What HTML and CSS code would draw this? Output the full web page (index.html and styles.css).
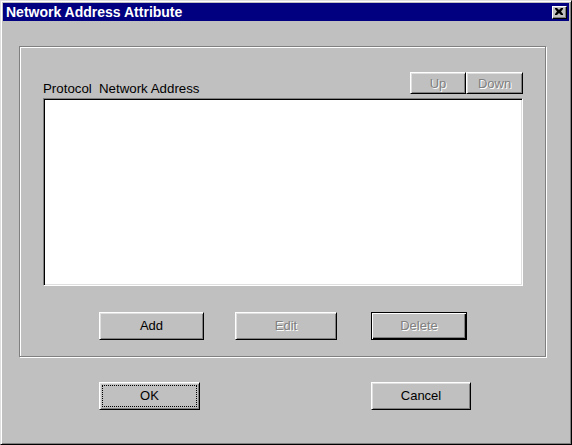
FILE: index.html
```html
<!DOCTYPE html>
<html>
<head>
<meta charset="utf-8">
<title>Network Address Attribute</title>
<link rel="stylesheet" href="styles.css">
</head>
<body>
<div class="window">
  <div class="titlebar">
    <span class="title">Network Address Attribute</span>
    <span class="close">
      <svg width="8" height="7" viewBox="0 0 8 7"><path d="M0 0h2l2 2 2-2h2v1l-2 2.5 2 2.5v1h-2l-2-2-2 2h-2v-1l2-2.5-2-2.5z" fill="#000"/></svg>
    </span>
  </div>
  <div class="group">
    <div class="toprow">
      <div class="header"><span class="col1">Protocol</span><span>Network Address</span></div>
      <div class="updown">
        <button class="btn disabled up">Up</button>
        <button class="btn disabled down">Down</button>
      </div>
    </div>
    <div class="list"></div>
    <div class="actions">
      <button class="btn add">Add</button>
      <button class="btn disabled edit">Edit</button>
      <button class="btn disabled default delete">Delete</button>
    </div>
  </div>
  <div class="footer">
    <button class="btn ok"><span class="focus">OK</span></button>
    <button class="btn cancel">Cancel</button>
  </div>
</div>
</body>
</html>
```
FILE: styles.css
```css
html, body {
  margin: 0;
  padding: 0;
  background: #c0c0c0;
}
.window {
  width: 572px;
  height: 445px;
  box-sizing: border-box;
  background: #c0c0c0;
  border: 1px solid;
  border-color: #dfdfdf #000 #000 #dfdfdf;
  box-shadow: inset 1px 1px #fff, inset -1px -1px #808080;
  padding: 2px;
  font-family: "Liberation Sans", Arial, sans-serif;
  font-size: 13px;
  color: #000;
}
.titlebar {
  height: 18px;
  background: #000080;
  display: flex;
  align-items: center;
  justify-content: space-between;
  padding-left: 3px;
  padding-right: 2px;
}
.title {
  color: #fff;
  font-weight: bold;
  font-size: 14px;
  line-height: 18px;
}
.close {
  width: 15px;
  height: 13px;
  box-sizing: border-box;
  background: #c0c0c0;
  border: 1px solid;
  border-color: #fff #000 #000 #fff;
  box-shadow: inset -1px -1px #808080;
  display: flex;
  align-items: center;
  justify-content: center;
}
.close svg {
  display: block;
  margin: 0 1px 1px 0;
}
.group {
  margin: 25px 0 0 16px;
  width: 527px;
  height: 311px;
  box-sizing: border-box;
  border: 1px solid #808080;
  box-shadow: 1px 1px 0 #fff, inset 1px 1px 0 #fff;
  padding: 25px 0 0 23px;
}
.toprow {
  width: 480px;
  height: 22px;
  display: flex;
  align-items: flex-end;
  justify-content: space-between;
}
.header {
  line-height: 15px;
  font-size: 13.3px;
  display: flex;
  margin-bottom: -2px;
}
.col1 {
  width: 56px;
}
.updown {
  display: flex;
  align-self: stretch;
}
.btn {
  font-family: "Liberation Sans", Arial, sans-serif;
  font-size: 13px;
  color: #000;
  background: #c0c0c0;
  border: 1px solid;
  border-color: #fff #000 #000 #fff;
  box-shadow: inset 1px 1px #dfdfdf, inset -1px -1px #808080;
  padding: 0;
  margin: 0;
  box-sizing: border-box;
  display: flex;
  align-items: center;
  justify-content: center;
}
.btn.disabled {
  color: #808080;
  text-shadow: 1px 1px 0 #fff;
}
.btn.default {
  border-color: #000;
  box-shadow: inset 1px 1px #fff, inset -1px -1px #000, inset -2px -2px #808080;
}
.up {
  width: 56px;
  height: 22px;
}
.down {
  width: 57px;
  height: 22px;
}
.list {
  margin-top: 4px;
  width: 480px;
  height: 188px;
  box-sizing: border-box;
  background: #fff;
  border: 1px solid;
  border-color: #808080 #fff #fff #808080;
  box-shadow: inset 1px 1px #000, inset -1px -1px #dfdfdf;
}
.actions {
  margin-top: 26px;
  display: flex;
  padding-left: 56px;
}
.actions .btn {
  height: 28px;
  padding-bottom: 2px;
}
.add {
  width: 105px;
}
.edit {
  width: 102px;
  margin-left: 31px;
}
.delete {
  width: 96px;
  margin-left: 34px;
}
.footer {
  margin-top: 25px;
  display: flex;
  padding-left: 96px;
}
.footer .btn {
  height: 28px;
}
.ok {
  width: 101px;
  padding: 2px;
}
.focus {
  flex: 1;
  align-self: stretch;
  border: 1px dotted #000;
  display: flex;
  align-items: center;
  justify-content: center;
  padding-bottom: 1px;
}
.cancel {
  width: 100px;
  margin-left: 171px;
  padding-bottom: 2px;
}
```
